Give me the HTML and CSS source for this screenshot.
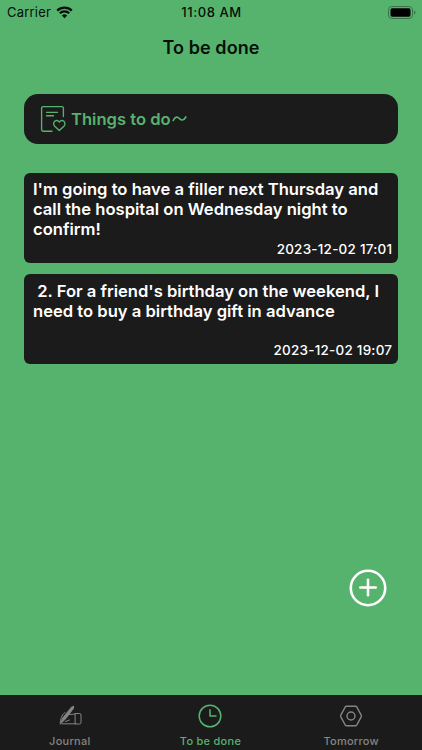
FILE: index.html
```html
<!DOCTYPE html>
<html lang="en">
<head>
<meta charset="utf-8">
<meta name="viewport" content="width=device-width, initial-scale=1">
<title>To be done</title>
<link rel="stylesheet" href="styles.css">
</head>
<body>
<div class="app">
  <header class="status">
    <div class="status-left">
      <span class="carrier">Carrier</span>
      <svg class="wifi" viewBox="0 0 17 13" width="17" height="13"><path d="M1.2 4.6a10.4 10.4 0 0 1 14.6 0M3.8 7.3a6.7 6.7 0 0 1 9.4 0" fill="none" stroke="#051008" stroke-width="2.2"/><path d="M8.5 12.2 5.9 9.6a3.7 3.7 0 0 1 5.2 0z" fill="#051008"/></svg>
    </div>
    <span class="clock">11:08 AM</span>
    <div class="status-right">
      <svg width="28" height="13" viewBox="0 0 28 13"><rect x=".5" y=".5" width="24" height="12" rx="3.4" fill="none" stroke="#387545"/><rect x="2.5" y="2.3" width="20" height="8.4" rx="1.6" fill="#000"/><path d="M26 4.5q1.5.5 1.5 2t-1.5 2z" fill="#387545"/></svg>
    </div>
  </header>
  <h1 class="title">To be done</h1>
  <main class="content">
    <section class="banner">
      <svg class="note" width="26" height="28" viewBox="0 0 26 28" fill="none" stroke="#56b36d" stroke-width="1.35" stroke-linecap="round" stroke-linejoin="round"><path d="M12 26.2H3.2a1.6 1.6 0 0 1-1.6-1.6V3.2a1.6 1.6 0 0 1 1.6-1.6h18.6a1.6 1.6 0 0 1 1.6 1.6v8.3M6.5 7.3h11M6.5 10.7h7"/><path d="M19.3 25.6l-4.6-4.3c-1.8-1.8-1.2-5.4 1.5-5.8 1.5-.2 2.5.7 3.1 1.6.6-.9 1.6-1.8 3.1-1.6 2.7.4 3.3 4 1.5 5.8z"/></svg>
      <span class="banner-text">Things to do</span>
      <svg class="wave" width="15" height="8" viewBox="0 0 15 8"><path d="M1.2 5.5C3.5.8 5.8 2 7.5 3.6s4 2.7 6.300-1.600" fill="none" stroke="#56b36d" stroke-width="1.7" stroke-linecap="round"/></svg>
    </section>
    <article class="card">
      <p>I'm going to have a filler next Thursday and call the hospital on Wednesday night to confirm!</p>
      <time>2023-12-02 17:01</time>
    </article>
    <article class="card card-second">
      <p> 2. For a friend's birthday on the weekend, I need to buy a birthday gift in advance</p>
      <time>2023-12-02 19:07</time>
    </article>
  </main>
  <button class="add" aria-label="Add"><svg width="38" height="38" viewBox="0 0 38 38" fill="none" stroke="#fff" stroke-width="2.6" stroke-linecap="round"><circle cx="19" cy="19" r="17.2"/><path d="M11.3 18.5h15.4M19 10.8v15.4"/></svg></button>
  <nav class="tabs">
    <a class="tab">
      <svg width="26" height="26" viewBox="0 0 26 26" fill="none" stroke="#858585" stroke-linecap="round" stroke-linejoin="round"><path d="M8 9.5C5.500 11 4 14 3.200 19.500M5 20.800H18.500M12.500 11.500l6-.5M8.500 18.500l4-1.500M18.500 10.500h4q1.500 0 1.500 1.500v7.500q0 1.500-1.500 1.500h-4z" stroke-width="1"/><path d="M3.200 21 6 14.500 14.500 4l2-1 .2 2.200L9 15.500z" fill="#858585" stroke-width=".8"/></svg>
      <span>Journal</span>
    </a>
    <a class="tab active">
      <svg width="26" height="26" viewBox="0 0 26 26" fill="none" stroke="#56b36d" stroke-width="1.5" stroke-linecap="round" stroke-linejoin="round"><circle cx="13" cy="13" r="10.8"/><path d="M13 6.7V13h6"/></svg>
      <span>To be done</span>
    </a>
    <a class="tab">
      <svg width="26" height="26" viewBox="0 0 26 26" fill="none" stroke="#858585" stroke-width="1.4" stroke-linejoin="round"><path d="M8.5 3.2h9q.8 0 1.2.7l4.500 8.300q.4.8 0 1.600l-4.500 8.300q-.4.7-1.200.7h-9q-.8 0-1.200-.7L2.800 13.800q-.4-.8 0-1.600l4.500-8.300q.4-.7 1.200-.7z"/><circle cx="13" cy="13" r="4"/></svg>
      <span>Tomorrow</span>
    </a>
  </nav>
</div>
</body>
</html>
```
FILE: styles.css
```css
* { box-sizing: border-box; }
body { margin: 0; font-family: Inter, "Liberation Sans", sans-serif; }
.app { position: relative; display: flex; flex-direction: column; width: 422px; height: 750px; background: #56b36d; overflow: hidden; }
.status { display: grid; grid-template-columns: 1fr auto 1fr; align-items: center; height: 24px; padding: 0 6px 0 7px; color: #051008; }
.status-left { display: flex; align-items: center; gap: 5px; }
.carrier { font-size: 13px; letter-spacing: .2px; }
.clock { font-size: 13px; font-weight: 500; letter-spacing: .55px; }
.status-right { display: flex; justify-content: flex-end; }
.title { margin: 0; padding-top: 1px; height: 46px; line-height: 46px; text-align: center; font-size: 18px; font-weight: 600; letter-spacing: .1px; color: #051008; }
.content { flex: 1; padding: 24px 24px 0; }
.banner { display: flex; align-items: center; height: 50px; margin-bottom: 29px; padding-left: 16px; border-radius: 14px; background: #1b1b1b; color: #56b36d; }
.banner-text { margin-left: 5px; font-size: 16.6px; font-weight: 600; }
.wave { margin-left: 1px; }
.card { display: flex; flex-direction: column; justify-content: space-between; height: 90px; margin-bottom: 11.4px; padding: 6px 6px 5px 9px; border-radius: 6px; background: #1b1b1b; color: #fff; }
.card-second { padding-top: 6.4px; }
.card p { margin: 0; white-space: pre-wrap; font-size: 16.6px; line-height: 20px; font-weight: 600; }
.card time { align-self: flex-end; margin-right: -.3px; font-size: 13.5px; line-height: 17px; font-weight: 500; letter-spacing: .22px; }
.add { position: absolute; left: 349px; top: 569px; width: 38px; height: 38px; padding: 0; border: 0; background: none; }
.add svg { display: block; }
.tabs { display: grid; grid-template-columns: repeat(3, 1fr); height: 55px; background: #1b1b1b; }
.tab { display: flex; flex-direction: column; align-items: center; padding: 8px 1px 0 0; color: #858585; font-size: 11px; font-weight: 500; line-height: 14px; }
.tab span { margin-top: 5px; letter-spacing: .27px; }
.tab.active { color: #56b36d; }
```
